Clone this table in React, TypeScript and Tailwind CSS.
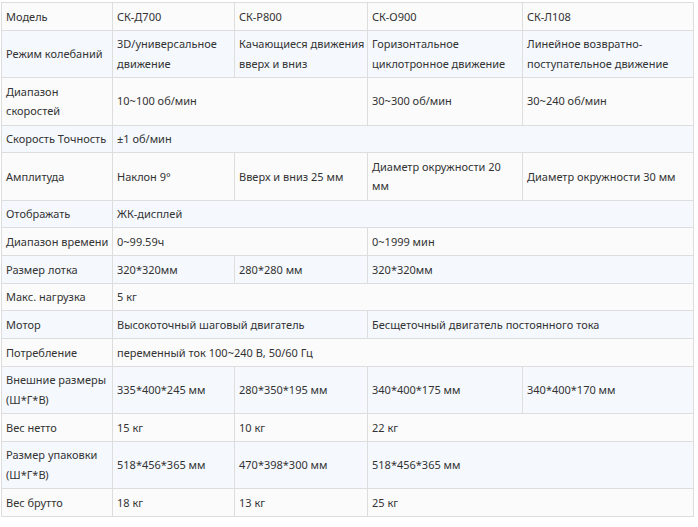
import React from 'react';

type Cell = { text: string; span?: number };
type Row = { label: string; cells: Cell[] };

// line breaks are placed where the source table wraps
const rows: Row[] = [
    { label: 'Модель', cells: [{ text: 'СК-Д700' }, { text: 'СК-Р800' }, { text: 'СК-О900' }, { text: 'СК-Л108' }] },
    {
        label: 'Режим колебаний',
        cells: [
            { text: '3D/универсальное\nдвижение' },
            { text: 'Качающиеся движения\nвверх и вниз' },
            { text: 'Горизонтальное\nциклотронное движение' },
            { text: 'Линейное возвратно-\nпоступательное движение' },
        ],
    },
    { label: 'Диапазон\nскоростей', cells: [{ text: '10~100 об/мин', span: 2 }, { text: '30~300 об/мин' }, { text: '30~240 об/мин' }] },
    { label: 'Скорость Точность', cells: [{ text: '±1 об/мин', span: 4 }] },
    {
        label: 'Амплитуда',
        cells: [
            { text: 'Наклон 9°' },
            { text: 'Вверх и вниз 25 мм' },
            { text: 'Диаметр окружности 20\nмм' },
            { text: 'Диаметр окружности 30 мм' },
        ],
    },
    { label: 'Отображать', cells: [{ text: 'ЖК-дисплей', span: 4 }] },
    { label: 'Диапазон времени', cells: [{ text: '0~99.59ч', span: 2 }, { text: '0~1999 мин', span: 2 }] },
    { label: 'Размер лотка', cells: [{ text: '320*320мм' }, { text: '280*280 мм' }, { text: '320*320мм', span: 2 }] },
    { label: 'Макс. нагрузка', cells: [{ text: '5 кг', span: 4 }] },
    {
        label: 'Мотор',
        cells: [
            { text: 'Высокоточный шаговый двигатель', span: 2 },
            { text: 'Бесщеточный двигатель постоянного тока', span: 2 },
        ],
    },
    { label: 'Потребление', cells: [{ text: 'переменный ток 100~240 В, 50/60 Гц', span: 4 }] },
    {
        label: 'Внешние размеры\n(Ш*Г*В)',
        cells: [{ text: '335*400*245 мм' }, { text: '280*350*195 мм' }, { text: '340*400*175 мм' }, { text: '340*400*170 мм' }],
    },
    { label: 'Вес нетто', cells: [{ text: '15 кг' }, { text: '10 кг' }, { text: '22 кг', span: 2 }] },
    {
        label: 'Размер упаковки\n(Ш*Г*В)',
        cells: [{ text: '518*456*365 мм' }, { text: '470*398*300 мм' }, { text: '518*456*365 мм', span: 2 }],
    },
    { label: 'Вес брутто', cells: [{ text: '18 кг' }, { text: '13 кг' }, { text: '25 кг', span: 2 }] },
];

const cellCls = 'border border-[#dddddd] px-[4px] py-[3.5px] align-middle whitespace-pre overflow-hidden';

const App: React.FC = () => {
    return (
        <div className="bg-white pt-[2px] pl-px font-['Noto_Sans',sans-serif] text-[11px] leading-[19.7px] text-[#333333]">
            <table className="w-[692px] table-fixed border-collapse">
                <colgroup>
                    <col className="w-[111px]" />
                    <col className="w-[122px]" />
                    <col className="w-[133px]" />
                    <col className="w-[155px]" />
                    <col className="w-[171px]" />
                </colgroup>
                <tbody>
                    {rows.map((row, i) => (
                        <tr key={row.label} className={i % 2 === 0 ? 'bg-[#fbfbfb]' : 'bg-[#f5f9fe]'}>
                            <td className={cellCls}>{row.label}</td>
                            {row.cells.map((c, j) => (
                                <td key={j} colSpan={c.span ?? 1} className={cellCls}>
                                    {c.text}
                                </td>
                            ))}
                        </tr>
                    ))}
                </tbody>
            </table>
        </div>
    );
};

export default App;
